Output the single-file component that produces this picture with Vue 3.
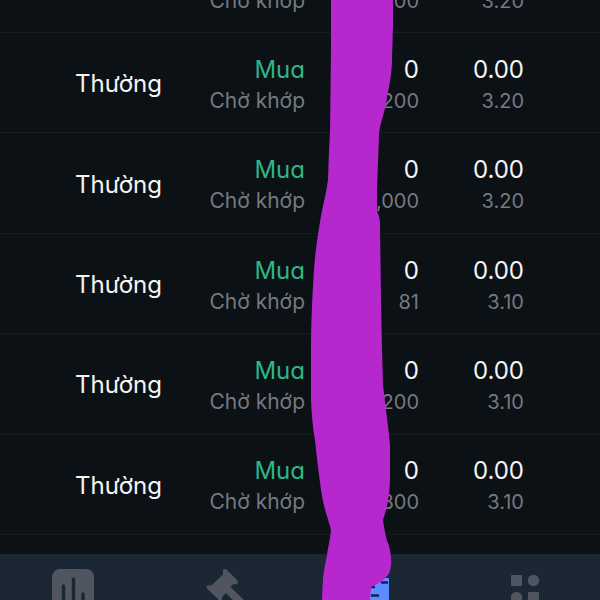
<script setup>
const orders = [
  { type: 'Thường', side: 'Mua', status: 'Chờ khớp', filled: '0', volume: '200', avg: '0.00', price: '3.20' },
  { type: 'Thường', side: 'Mua', status: 'Chờ khớp', filled: '0', volume: '200', avg: '0.00', price: '3.20' },
  { type: 'Thường', side: 'Mua', status: 'Chờ khớp', filled: '0', volume: ',000', avg: '0.00', price: '3.20' },
  { type: 'Thường', side: 'Mua', status: 'Chờ khớp', filled: '0', volume: '81', avg: '0.00', price: '3.10' },
  { type: 'Thường', side: 'Mua', status: 'Chờ khớp', filled: '0', volume: '200', avg: '0.00', price: '3.10' },
  { type: 'Thường', side: 'Mua', status: 'Chờ khớp', filled: '0', volume: '800', avg: '0.00', price: '3.10' },
]
</script>

<template>
  <div class="screen">
    <main class="content">
      <table class="orders">
        <colgroup>
          <col class="col-type" />
          <col class="col-side" />
          <col class="col-volume" />
          <col />
        </colgroup>
        <tbody>
          <tr v-for="(order, i) in orders" :key="i">
            <td class="type">{{ order.type }}</td>
            <td>
              <div class="primary buy">{{ order.side }}</div>
              <div class="secondary status">{{ order.status }}</div>
            </td>
            <td>
              <div class="primary">{{ order.filled }}</div>
              <div class="secondary">{{ order.volume }}</div>
            </td>
            <td class="price">
              <div class="primary">{{ order.avg }}</div>
              <div class="secondary">{{ order.price }}</div>
            </td>
          </tr>
        </tbody>
      </table>
    </main>

    <nav class="tabs">
      <button type="button" class="tab" aria-label="Market">
        <svg width="48" height="44" viewBox="0 0 48 44">
          <rect x="1" y="1" width="42" height="42" rx="8" fill="#50555f" />
          <path d="M12.500 18V34M22.500 11V34M32 26V34" stroke="#1c2735" stroke-width="3.400" stroke-linecap="round" />
        </svg>
      </button>
      <button type="button" class="tab" aria-label="Auction">
        <svg width="48" height="44" viewBox="0 0 48 44" fill="#50555f">
          <path d="M22 2Q24 0 26 2L36 12Q38 14 36 16Q34 16.500 32.500 16L29.500 19L47 36L41 42L25 25L21 29L21 31Q20 34 18 32L6 20.500Q5 18.500 7 17.500L11 17L22 6.500Z" />
        </svg>
      </button>
      <button type="button" class="tab" aria-label="Orders">
        <svg width="48" height="44" viewBox="0 0 48 44">
          <rect x="10" y="10" width="28" height="34" fill="#5c8cff" />
          <path d="M19 19H24M30 14.500H37M20 27.500H28" stroke="#14204f" stroke-width="2.500" />
        </svg>
      </button>
      <button type="button" class="tab" aria-label="More">
        <svg width="48" height="44" viewBox="0 0 48 44" fill="#50555f">
          <rect x="10" y="7" width="11" height="11" rx="1" />
          <circle cx="32.500" cy="12.500" r="5.700" />
          <circle cx="15.500" cy="29.500" r="5.700" />
          <rect x="27" y="24" width="11" height="11" rx="1" />
        </svg>
      </button>
    </nav>

    <svg class="marker" width="100" height="600" viewBox="0 0 100 600" aria-hidden="true">
      <path
        fill="#b727ce"
        d="M31 0L31 50L30 133L29 150L28 180C26 195 22 208 20 222C17 240 15 255 14 270C12 300 11 325 11 350L11 400C12 420 13 428 15 440C17 460 19 475 21 490C24 510 29 521 31 530C30 540 28 547 27 555C25 565 24 570 23 578L22 600H70L71 587C76 585 79 583 82 581C87 577 90 573 90 570C92 563 91 560 91 557C90 549 89 545 87 541C85 533 84 527 83 520C86 511 87 506 88 500Q90 490 90 475L90 445C89 432 87 420 86 410L83 385L82 350L81 300L80 225Q80 216 77 212L77 190L79 133C81 120 85 112 87 98C89 86 92 73 92 60L93 25V0Z"
      />
    </svg>
  </div>
</template>

<style>
body {
  background: #0c1115;
  overflow: hidden;
}
</style>

<style scoped>
.screen {
  position: relative;
  display: flex;
  flex-direction: column;
  height: 100vh;
  overflow: hidden;
  background: #0c1115;
  color: #f4f5f6;
  font-family: Inter, "Noto Sans", sans-serif;
  font-feature-settings: "cv11";
}
.content {
  flex: 1;
  min-height: 0;
  overflow: hidden;
}
.orders {
  width: 100%;
  height: 602px;
  margin-top: -67px;
  border-collapse: collapse;
  table-layout: fixed;
}
.col-type {
  width: 32%;
}
.col-side,
.col-volume {
  width: 19%;
}
td {
  padding: 4px 1px 0 0;
  border-bottom: 1px solid #171c20;
  text-align: right;
  vertical-align: middle;
  white-space: nowrap;
}
.type {
  padding-top: 2px;
  padding-left: 75px;
  text-align: left;
  font-size: 24px;
}
.price {
  padding-right: 76px;
}
.primary {
  font-size: 24px;
  line-height: 32px;
}
.secondary {
  font-size: 20px;
  line-height: 30px;
  color: #757980;
}
.status {
  font-size: 21px;
}
.buy {
  color: #2fb586;
}
.tabs {
  display: flex;
  height: 46px;
  background: #1c2735;
}
.tab {
  flex: 1;
  display: flex;
  justify-content: center;
  align-items: flex-start;
  padding: 14px 0 0;
  border: 0;
  background: none;
}
.tab svg {
  flex: none;
}
.marker {
  position: absolute;
  top: 0;
  left: 50%;
}
</style>
